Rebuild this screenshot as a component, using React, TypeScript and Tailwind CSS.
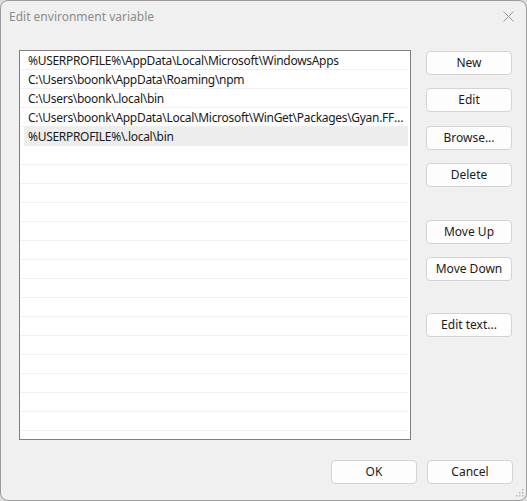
const paths = [
  "%USERPROFILE%\\AppData\\Local\\Microsoft\\WindowsApps",
  "C:\\Users\\boonk\\AppData\\Roaming\\npm",
  "C:\\Users\\boonk\\.local\\bin",
  "C:\\Users\\boonk\\AppData\\Local\\Microsoft\\WinGet\\Packages\\Gyan.FFmpeg_Microsoft.Winget.Source_8wekyb3d8bbwe\\ffmpeg-7.1-full_build\\bin",
  "%USERPROFILE%\\.local\\bin",
];

const Btn = ({ label, className = "" }: { label: string; className?: string }) => (
  <button
    className={`w-[86px] h-[24px] rounded-[4px] border border-[#d3d3d3] bg-[#fdfdfd] text-[12px] text-[#1b1b1b] leading-none ${className}`}
  >
    {label}
  </button>
);

export default function App() {
  const rows = Array.from({ length: 20 }, (_, i) => paths[i] ?? "");

  return (
    <div
      className="w-[527px] h-[501px] bg-[#dcdcdc]"
      style={{ fontFamily: '"Noto Sans", "Open Sans", sans-serif' }}
    >
      <div className="w-full h-full flex flex-col rounded-[8px] border border-[#9c9c9c] bg-[#f0f0f0] overflow-hidden">
        {/* title bar */}
        <div className="h-[32px] flex items-center justify-between pl-[8px] pr-[12px]">
          <span className="text-[12px] text-[#8c8c8c] mt-[-1px]">Edit environment variable</span>
          <svg width="11" height="11" viewBox="0 0 11 11" className="mt-[-1px]">
            <path d="M0.5 0.5 L10.5 10.5 M10.5 0.5 L0.5 10.5" stroke="#9a9a9a" strokeWidth="1" />
          </svg>
        </div>

        {/* body */}
        <div className="flex pl-[18px] pt-[17px]">
          <div className="w-[392px] h-[390px] border border-[#7f7f7f] bg-white overflow-hidden">
            {rows.map((p, i) => (
              <div
                key={i}
                className={`h-[19px] mr-[2px] border-b border-[#efefef] pt-[2px] pr-[4px] text-[12px] tracking-[-0.3px] leading-[16px] text-[#1a1a1a] truncate ${
                  i === 4 ? "bg-[#ededed] ml-[4px] pl-[4px]" : "pl-[8px]"
                }`}
              >
                {p}
              </div>
            ))}
          </div>

          <div className="flex flex-col ml-[15px]">
            <Btn label="New" className="mt-[1px]" />
            <Btn label="Edit" className="mt-[13px]" />
            <Btn label="Browse..." className="mt-[14px]" />
            <Btn label="Delete" className="mt-[13px]" />
            <Btn label="Move Up" className="mt-[33px]" />
            <Btn label="Move Down" className="mt-[13px]" />
            <Btn label="Edit text..." className="mt-[32px]" />
          </div>
        </div>

        {/* footer */}
        <div className="flex justify-end gap-[10px] pr-[13px] mt-[20px]">
          <Btn label="OK" />
          <Btn label="Cancel" />
        </div>

        <div className="flex justify-end pr-[2px] mt-[5px]">
          <svg width="8" height="8" viewBox="0 0 8 8">
            <rect x="6" y="0" width="1.5" height="1.5" fill="#b5b5b5" />
            <rect x="3" y="3" width="1.5" height="1.5" fill="#b5b5b5" />
            <rect x="6" y="3" width="1.5" height="1.5" fill="#b5b5b5" />
            <rect x="0" y="6" width="1.5" height="1.5" fill="#b5b5b5" />
            <rect x="3" y="6" width="1.5" height="1.5" fill="#b5b5b5" />
            <rect x="6" y="6" width="1.5" height="1.5" fill="#b5b5b5" />
          </svg>
        </div>
      </div>
    </div>
  );
}
